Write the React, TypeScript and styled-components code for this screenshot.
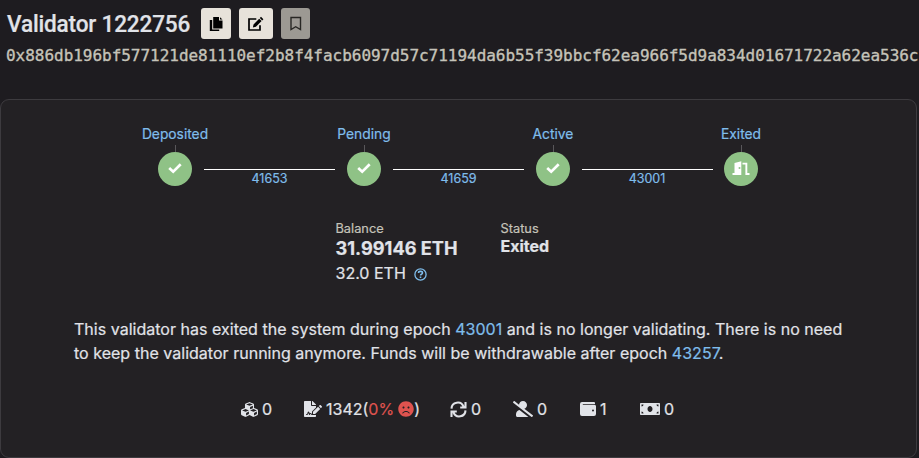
import React from 'react';
import styled, { createGlobalStyle } from 'styled-components';
import { FaCubes, FaFileSignature, FaUserSlash, FaFrown, FaMoneyBill } from 'react-icons/fa';

const GlobalStyle = createGlobalStyle`
  * { box-sizing: border-box; }
  body { margin: 0; background: #1e1c20; color: #e1e3e8; font-family: Inter, sans-serif; font-size: 16px; overflow: hidden; -webkit-text-stroke: 0.2px currentColor; }
`;
const Page = styled.div`height: 458px; overflow: hidden;`;
const Header = styled.header`height: 99px; padding: 8px 0 0 7px;`;
const TitleRow = styled.div`display: flex; align-items: center; height: 31px;`;
const Title = styled.h1`
  margin: 0 12px 0 0; width: 182px; white-space: nowrap;
  font: 500 24px/31px Roboto, sans-serif; letter-spacing: -0.18px;
  padding-top: 1px; transform: scaleX(0.94); transform-origin: left center;
`;
const Action = styled.button<{ $w: number; $gap?: number; $muted?: boolean }>`
  display: flex; align-items: center; justify-content: center; padding: 0;
  width: ${p => p.$w}px; height: 31px; margin-right: ${p => p.$gap ?? 0}px;
  border: 0; border-radius: 3px; color: ${p => (p.$muted ? '#282724' : '#000')};
  background: ${p => (p.$muted ? '#9c9993' : '#e7e2da')};
`;
const PublicKey = styled.div`
  margin: 5px 0 0 -1px; white-space: nowrap; color: #c5c3b9; -webkit-text-stroke-width: 0.35px;
  font: 16px/24px "DejaVu Sans Mono", monospace; letter-spacing: -0.028px;
`;
const Card = styled.main`
  width: 917px; height: 359px; border: 1px solid #3d3b3f; border-radius: 9px;
  background: #232124; padding: 24px 0 0;
`;
const Timeline = styled.div`display: flex; padding-left: 140px; height: 65px;`;
const Stage = styled.div`width: 68px; display: flex; flex-direction: column; align-items: center; flex-shrink: 0;`;
const StageName = styled.a`color: #7fbdeb; font-size: 13.8px; line-height: 20px; height: 21px; white-space: nowrap;`;
const Tick = styled.i`width: 1px; height: 7px; background: #59575a;`;
const Disc = styled.div`
  width: 34px; height: 34px; border-radius: 50%; background: #8fc286; color: #fff;
  display: flex; justify-content: center; align-items: center;
`;
const Connector = styled.div<{ $w: number }>`
  width: ${p => p.$w}px; display: flex; flex-direction: column; align-items: center; padding-top: 45px;
`;
const Line = styled.i`width: 131px; height: 1px; background: #fff; flex-shrink: 0;`;
const Epoch = styled.a`color: #7fbdeb; font-size: 12.5px; line-height: 18px;`;
const Details = styled.section`display: flex; padding-left: 334.5px; margin-top: 30px; height: 84px;`;
const Detail = styled.div<{ $w: number }>`width: ${p => p.$w}px; white-space: nowrap;`;
const Label = styled.div`font-size: 12.8px; line-height: 19px; color: #c5c3b9;`;
const Value = styled.div<{ $large?: boolean }>`
  font-size: ${p => (p.$large ? 18.2 : 16)}px; line-height: ${p => (p.$large ? 20 : 17)}px; font-weight: 700;
`;
const Effective = styled.div`display: flex; align-items: center; gap: 8px; line-height: 30px; svg { color: #7fbdeb; margin-top: 2px; }`;
const Notice = styled.p`margin: 14px 73px 0; line-height: 24px; white-space: nowrap; letter-spacing: 0.02px; a { color: #7fbdeb; }`;
const Stats = styled.footer`display: flex; align-items: center; margin-top: 31px; padding-left: 240px; height: 26px;`;
const Stat = styled.div<{ $w: number }>`
  width: ${p => p.$w}px; display: flex; align-items: center; flex-shrink: 0; white-space: nowrap;
  svg { margin-right: 4px; }
`;
const Danger = styled.span`display: flex; align-items: center; color: #df534f; svg { margin: 0 0 0 4px; }`;

function CheckIcon() {
  return <svg width="16" height="16" viewBox="0 0 16 16"><path d="M2.2 7 6.2 10.7 13.7 3.3" fill="none" stroke="currentColor" strokeWidth="2.7" /></svg>;
}
function DoorIcon() {
  return <svg width="18" height="16" viewBox="0 0 18 16"><path fill="currentColor" fillRule="evenodd" d="M2.5 1.9 9.3.2V13.9H.5v-1.8h2zm4 5.1a1 1 0 1 0 2 0 1 1 0 0 0-2 0M10.5 1.7h4.8v10.4h2.2v1.8h-4.1V3.5h-2.9z" /></svg>;
}
function CopyIcon() {
  return <svg width="14" height="16" viewBox="0 0 14 16"><path fill="currentColor" d="M4.2 1h5.8v3.6h3.5v7.9H4.2zm6.8.2 2.5 2.4H11zM.8 4h2.4v9.5h7V15H.8z" /></svg>;
}
function EditIcon() {
  return <svg width="16" height="16" viewBox="0 0 16 16"><path fill="none" stroke="currentColor" strokeWidth="1.7" d="M8.3 3H1v11h11V9.3" /><path fill="currentColor" d="m5.5 8.4 5.7-5.7 2.4 2.4-5.7 5.7-3 .6zM11.8 2 13 .8l2.4 2.4-1.2 1.3z" /></svg>;
}
function BookmarkIcon() {
  return <svg width="12" height="16" viewBox="0 0 12 16"><path fill="none" stroke="currentColor" strokeWidth="1.4" d="M1 1.5h9.5v12L5.7 10.7 1 13.5z" /></svg>;
}
function RefreshIcon() {
  return <svg width="17" height="17" viewBox="0 0 17 17"><path fill="none" stroke="currentColor" strokeWidth="2.1" d="M1.5 7.6a6.2 6.2 0 0 1 12-2M15.5 1v5.5h-5.3M15.5 9.4a6.2 6.2 0 0 1-12 2M1.5 16v-5.5h5.3" /></svg>;
}
function WalletIcon() {
  return <svg width="16" height="16" viewBox="0 0 16 16"><path fill="currentColor" fillRule="evenodd" d="M2 1h12q1 0 1 1v1H2.8v.8H14.5q1.5 0 1.5 1.5V13q0 2-2 2H2q-2 0-2-2V3q0-2 2-2m10 8.5a1 1 0 1 0 2 0 1 1 0 0 0-2 0" /></svg>;
}
function HelpIcon() {
  return <svg width="13" height="13" viewBox="0 0 13 13" fill="none" stroke="currentColor"><circle cx="6.5" cy="6.5" r="5.6" strokeWidth="1.3" /><path strokeWidth="1.6" d="M4.5 5V4.7q0-1.3 1.6-1.3h.8q1.6 0 1.6 1.4 0 .9-1 1.4-.9.5-.9 1.2M6.5 8.6v1.5" /></svg>;
}

const connectors = [
  { epoch: '41653', width: 121 },
  { epoch: '41659', width: 121 },
  { epoch: '43001', width: 120 },
];

export default function App() {
  return <><GlobalStyle /><Page>
    <Header>
      <TitleRow>
        <Title>Validator 1222756</Title>
        <Action $w={30} $gap={8}><CopyIcon /></Action>
        <Action $w={34} $gap={8}><EditIcon /></Action>
        <Action $w={29} $muted><BookmarkIcon /></Action>
      </TitleRow>
      <PublicKey>0x886db196bf577121de81110ef2b8f4facb6097d57c71194da6b55f39bbcf62ea966f5d9a834d01671722a62ea536c</PublicKey>
    </Header>
    <Card>
      <Timeline>
        {['Deposited', 'Pending', 'Active', 'Exited'].map((name, i) => <React.Fragment key={name}>
          <Stage><StageName>{name}</StageName><Tick /><Disc>{i === 3 ? <DoorIcon /> : <CheckIcon />}</Disc></Stage>
          {connectors[i] && <Connector $w={connectors[i].width}><Line /><Epoch>{connectors[i].epoch}</Epoch></Connector>}
        </React.Fragment>)}
      </Timeline>
      <Details>
        <Detail $w={165}><Label>Balance</Label><Value $large>31.99146 ETH</Value><Effective>32.0 ETH <HelpIcon /></Effective></Detail>
        <Detail $w={100}><Label>Status</Label><Value>Exited</Value></Detail>
      </Details>
      <Notice>This validator has exited the system during epoch <a>43001</a> and is no longer validating. There is no need<br />to keep the validator running anymore. Funds will be withdrawable after epoch <a>43257</a>.</Notice>
      <Stats>
        <Stat $w={63}><FaCubes size={17} />0</Stat>
        <Stat $w={146}><FaFileSignature size={18} />1342(<Danger>0%<FaFrown size={16} /></Danger>)</Stat>
        <Stat $w={63}><RefreshIcon />0</Stat>
        <Stat $w={67}><FaUserSlash size={20} />0</Stat>
        <Stat $w={60}><WalletIcon />1</Stat>
        <Stat $w={50}><FaMoneyBill size={20} />0</Stat>
      </Stats>
    </Card>
  </Page></>;
}
